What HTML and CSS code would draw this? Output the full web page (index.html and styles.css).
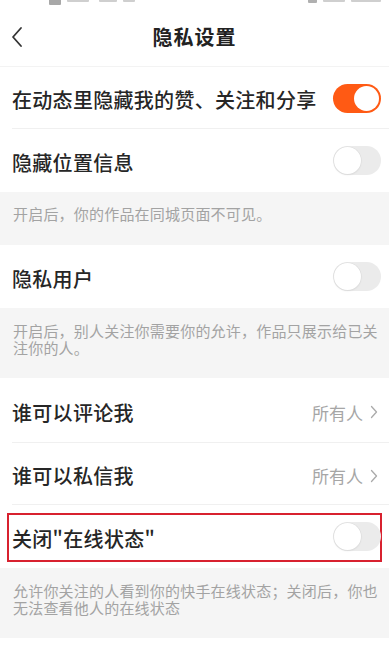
FILE: index.html
```html
<!DOCTYPE html>
<html lang="zh-CN">
<head>
<meta charset="utf-8">
<title>隐私设置</title>
<link rel="stylesheet" href="styles.css">
</head>
<body>
<div class="page">
  <div class="status">
    <span class="sb sb-icon"></span>
    <span class="sb sb-a"></span>
    <span class="sb sb-b"></span>
    <span class="sb sb-c"></span>
    <span class="spacer"></span>
    <span class="sb sb-d"></span>
    <span class="sb sb-e"></span>
    <span class="sb sb-f"></span>
  </div>
  <header class="header">
    <span class="back">
      <svg width="14" height="22" viewBox="0 0 14 22"><path d="M11 2 L3 11 L11 20" fill="none" stroke="#333" stroke-width="1.8" stroke-linecap="round" stroke-linejoin="round"/></svg>
    </span>
    <h1 class="title">隐私设置</h1>
  </header>

  <div class="row row-first sep">
    <span class="label">在动态里隐藏我的赞、关注和分享</span>
    <span class="toggle on"><span class="knob"></span></span>
  </div>
  <div class="row">
    <span class="label">隐藏位置信息</span>
    <span class="toggle"><span class="knob"></span></span>
  </div>
  <div class="note note-one">开启后，你的作品在同城页面不可见。</div>

  <div class="row">
    <span class="label">隐私用户</span>
    <span class="toggle"><span class="knob"></span></span>
  </div>
  <div class="note">开启后，别人关注你需要你的允许，作品只展示给已关注你的人。</div>

  <div class="row sep row-tall">
    <span class="label">谁可以评论我</span>
    <span class="value">所有人<svg class="chev" width="8" height="14" viewBox="0 0 8 14"><path d="M1.5 1.5 L6.5 7 L1.5 12.5" fill="none" stroke="#aaa" stroke-width="1.3" stroke-linecap="round" stroke-linejoin="round"/></svg></span>
  </div>
  <div class="row sep row-short">
    <span class="label">谁可以私信我</span>
    <span class="value">所有人<svg class="chev" width="8" height="14" viewBox="0 0 8 14"><path d="M1.5 1.5 L6.5 7 L1.5 12.5" fill="none" stroke="#aaa" stroke-width="1.3" stroke-linecap="round" stroke-linejoin="round"/></svg></span>
  </div>
  <div class="row highlight">
    <span class="label">关闭"在线状态"</span>
    <span class="toggle"><span class="knob"></span></span>
  </div>
  <div class="note">允许你关注的人看到你的快手在线状态；关闭后，你也无法查看他人的在线状态</div>
</div>
</body>
</html>
```

FILE: styles.css
```css
* { box-sizing: border-box; }
html, body {
  margin: 0;
  padding: 0;
  background: #fff;
}
body {
  font-family: "Noto Sans CJK SC", "Noto Sans", "Liberation Sans", sans-serif;
  color: #222;
  width: 389px;
  height: 647px;
  overflow: hidden;
}
.page {
  display: flex;
  flex-direction: column;
}
.status {
  height: 6px;
  display: flex;
  align-items: flex-start;
  padding: 0 8px 0 49px;
  gap: 6px;
}
.sb {
  display: block;
  height: 2px;
  background: #cfcfcf;
  border-radius: 0 0 1px 1px;
}
.sb-icon { width: 12px; height: 5px; background: #a8a8a8; }
.sb-a { width: 22px; }
.sb-b { width: 18px; margin-left: 4px; }
.sb-c { width: 12px; }
.spacer { flex: 1; }
.sb-d { width: 9px; height: 3px; background: #b0b0b0; }
.sb-e { width: 22px; }
.sb-f { width: 30px; }

.header {
  height: 61px;
  display: flex;
  align-items: center;
  justify-content: center;
  position: relative;
  border-bottom: 1px solid #f3f3f3;
}
.back {
  position: absolute;
  left: 10px;
  top: 20px;
  display: flex;
}
.title {
  margin: 0;
  font-size: 20px;
  font-weight: 700;
  color: #222;
  letter-spacing: 1px;
  padding-top: 1px;
}

.row {
  height: 63px;
  display: flex;
  align-items: center;
  justify-content: space-between;
  padding: 0 8px 0 12px;
  position: relative;
  background: #fff;
}
.row-first { height: 62px; }
.row-tall { height: 65px; }
.row-short { height: 62px; }
.sep::after {
  content: "";
  position: absolute;
  left: 12px;
  right: 0;
  bottom: 0;
  height: 1px;
  background: #f0f0f0;
}
.label {
  font-size: 20px;
  font-weight: 500;
  letter-spacing: 0.3px;
  color: #262626;
  padding-top: 3px;
}
.value {
  display: flex;
  align-items: center;
  gap: 7px;
  font-size: 17px;
  color: #a6a6a6;
  padding-top: 3px;
  padding-right: 3px;
}
.chev { display: block; }

.toggle {
  width: 48px;
  height: 29px;
  border-radius: 15px;
  background: #ebebeb;
  position: relative;
  flex-shrink: 0;
}
.toggle .knob {
  position: absolute;
  left: 1px;
  top: 1px;
  width: 27px;
  height: 27px;
  border-radius: 50%;
  background: #fff;
  box-shadow: 0 0 0 0.5px #dcdcdc, 0 1px 2px rgba(0,0,0,0.08);
}
.toggle.on {
  background: #ff5a14;
}
.toggle.on .knob {
  left: auto;
  right: 2px;
  top: 2px;
  width: 25px;
  height: 25px;
  box-shadow: none;
}

.note {
  background: #f5f5f5;
  color: #a3a3a3;
  font-size: 15px;
  line-height: 16.5px;
  letter-spacing: 0.2px;
  padding: 15px 8px 0 13px;
  height: 70px;
}
.note-one {
  height: 53px;
  padding-top: 14px;
}

.highlight::before {
  content: "";
  position: absolute;
  left: 7px;
  right: 7px;
  top: 8px;
  bottom: 6px;
  border: 2px solid #d8212f;
  pointer-events: none;
}
```
